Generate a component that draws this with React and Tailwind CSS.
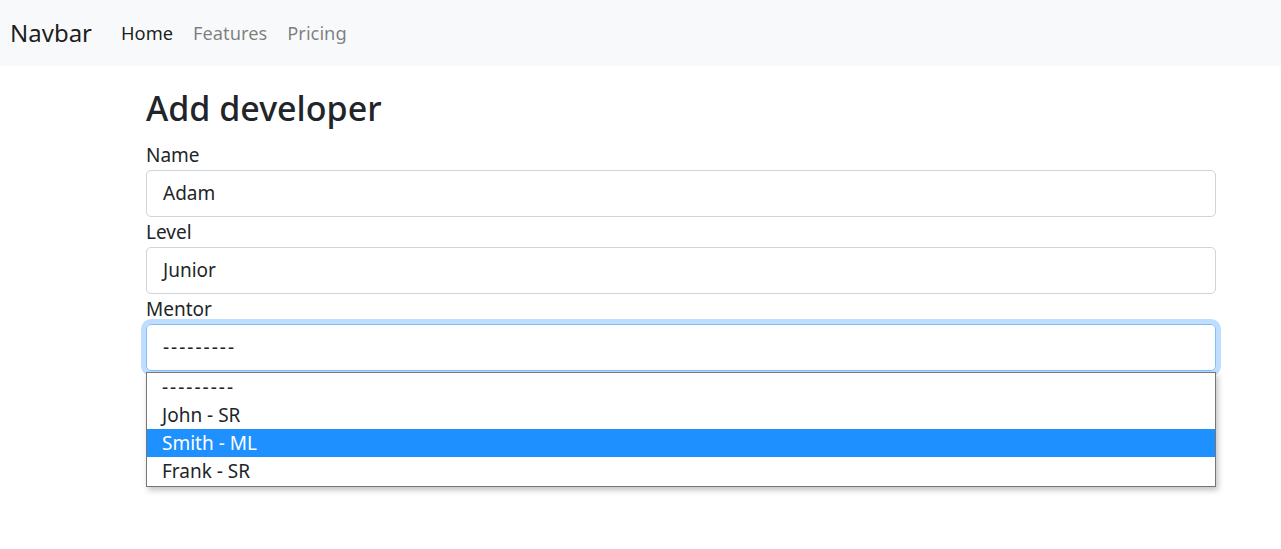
const LINKS = [
  { label: 'Home', active: true },
  { label: 'Features' },
  { label: 'Pricing' },
]

const MENTORS = ['---------', 'John - SR', 'Smith - ML', 'Frank - SR']

function Field({ label, value }) {
  return (
    <div>
      <label className="block leading-[29px] h-[29px]">{label}</label>
      <div className="h-[47px] border border-[#ced4da] rounded-[5px] px-[16px] flex items-center">
        {value}
      </div>
    </div>
  )
}

export default function App() {
  return (
    <div className="min-h-[549px] bg-white text-[#212529] text-[19px] font-['Noto_Sans',sans-serif]">
      {/* Navbar */}
      <nav className="h-[66px] bg-[#f8f9fa] flex items-center pl-[10px]">
        <span className="text-[24px] text-black/90 mr-[29px]">Navbar</span>
        <ul className="flex gap-[20px] text-[18.3px]">
          {LINKS.map((l) => (
            <li key={l.label} className={l.active ? 'text-black/90' : 'text-black/50'}>
              {l.label}
            </li>
          ))}
        </ul>
      </nav>

      {/* Form */}
      <div className="ml-[146px] w-[1070px] pt-[19px]">
        <h2 className="text-[34px] font-medium leading-[46px] mb-[10px]">Add developer</h2>
        <Field label="Name" value="Adam" />
        <div className="h-[1px]" />
        <Field label="Level" value="Junior" />
        <div className="h-[1px]" />
        <div>
          <label className="block leading-[29px] h-[29px]">Mentor</label>
          <div className="relative">
            <div className="h-[47px] border border-[#80bdff] rounded-[5px] px-[16px] flex items-center shadow-[0_0_0_5px_rgba(0,123,255,0.25)]">
              <span className="tracking-[2px]">---------</span>
            </div>
            <ul className="absolute left-0 right-0 top-[48px] pb-[1px] bg-white border border-[#767676] shadow-[2px_3px_6px_rgba(0,0,0,0.25)]">
              {MENTORS.map((m) => (
                <li
                  key={m}
                  className={
                    'h-[28px] leading-[28px] px-[15px] ' +
                    (m === 'Smith - ML' ? 'bg-[#1e90ff] text-white' : '') +
                    (m === '---------' ? 'tracking-[2px]' : '')
                  }
                >
                  {m}
                </li>
              ))}
            </ul>
          </div>
        </div>
      </div>
    </div>
  )
}
